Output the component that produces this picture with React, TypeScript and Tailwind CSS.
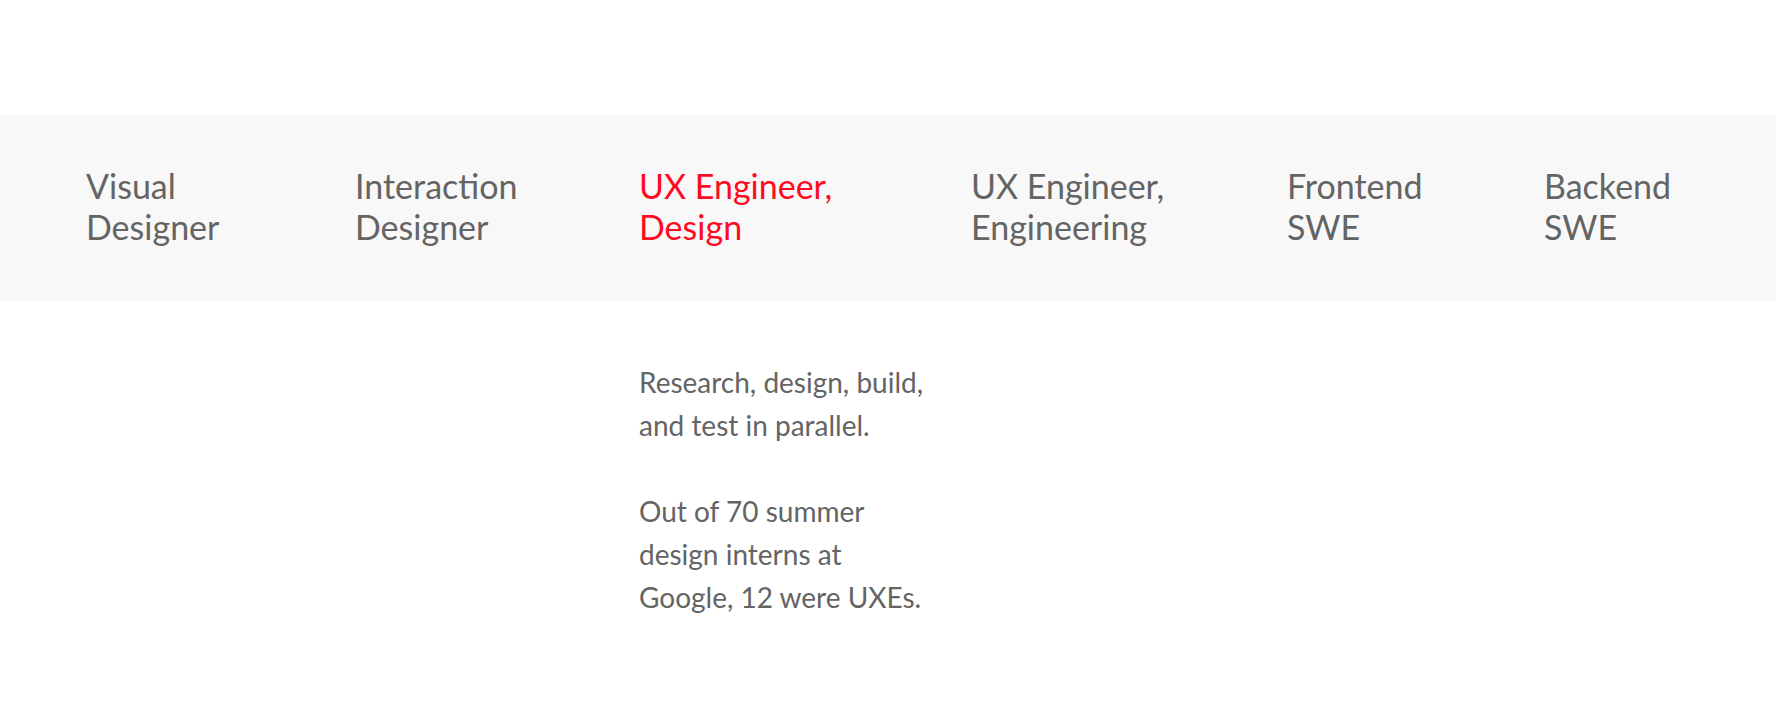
const roles = [
  { lines: ['Visual', 'Designer'] },
  { lines: ['Interaction', 'Designer'] },
  { lines: ['UX Engineer,', 'Design'], active: true },
  { lines: ['UX Engineer,', 'Engineering'] },
  { lines: ['Frontend', 'SWE'] },
  { lines: ['Backend', 'SWE'] },
];

export default function App() {
  return (
    <div className="min-h-[710px] w-full bg-white font-['Lato',sans-serif] text-[#646464]">
      <div className="h-[115px]" />
      <nav className="flex h-[186px] items-center bg-[#f8f8f8] pb-[4px] pl-[86px]">
        <div className="grid grid-cols-[269px_284px_332px_316px_257px_auto]">
          {roles.map((r, i) => (
            <div
              key={i}
              className={`text-[34px] leading-[41px] ${r.active ? 'text-[#ff0a1e]' : 'text-[#646464]'}`}
            >
              {r.lines[0]}
              <br />
              {r.lines[1]}
            </div>
          ))}
        </div>
      </nav>
      <section className="pl-[639px] pt-[60px] text-[28px] leading-[43px]">
        <p>
          Research, design, build,
          <br />
          and test in parallel.
        </p>
        <p className="mt-[43px]">
          Out of 70 summer
          <br />
          design interns at
          <br />
          Google, 12 were UXEs.
        </p>
      </section>
    </div>
  );
}
